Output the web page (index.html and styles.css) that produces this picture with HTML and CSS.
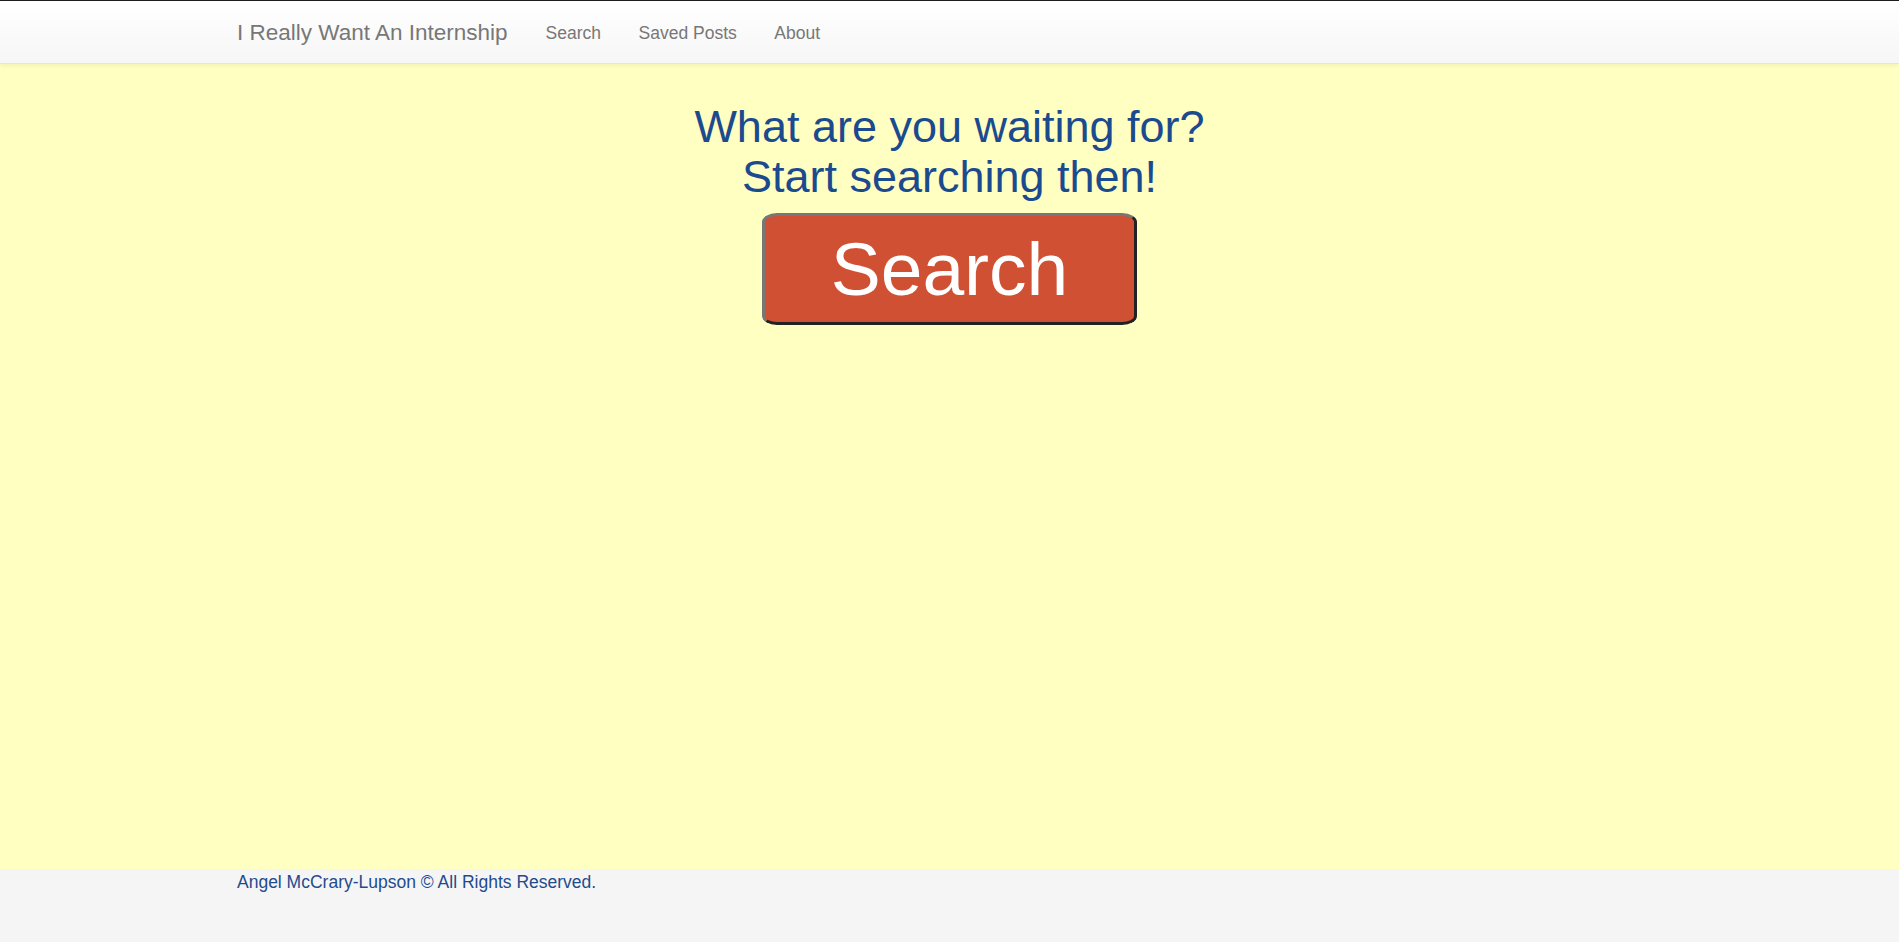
FILE: index.html
```html
<!DOCTYPE html>
<html lang="en">
<head>
<meta charset="utf-8">
<title>I Really Want An Internship</title>
<link rel="stylesheet" href="styles.css">
</head>
<body>
<nav class="navbar">
  <div class="container nav-inner">
    <a class="brand" href="#">I Really Want An Internship</a>
    <ul class="nav-links">
      <li><a href="#">Search</a></li>
      <li><a href="#">Saved Posts</a></li>
      <li><a href="#">About</a></li>
    </ul>
  </div>
</nav>
<main class="main">
  <h1 class="headline">What are you waiting for?<br>Start searching then!</h1>
  <button class="search-btn" type="button">Search</button>
</main>
<footer class="footer">
  <div class="container">
    <p class="footer-text">Angel McCrary-Lupson © All Rights Reserved.</p>
  </div>
</footer>
</body>
</html>
```
FILE: styles.css
```css
* { box-sizing: border-box; }
html, body { margin: 0; padding: 0; }
body {
  font-family: "Liberation Sans", Arial, sans-serif;
  min-height: 100vh;
  display: flex;
  flex-direction: column;
  background: #ffffc1;
}
.container {
  max-width: 1425px;
  width: 100%;
  margin: 0 auto;
}
.navbar {
  border-top: 1px solid #1c1c1c;
  border-bottom: 1px solid #e3e3e8;
  background: linear-gradient(to bottom, #ffffff 0%, #f6f6f6 100%);
  box-shadow: 0 1px 5px rgba(0, 0, 0, 0.075);
  position: relative;
  z-index: 1;
}
.nav-inner {
  height: 62px;
  padding-top: 2px;
  display: flex;
  align-items: center;
}
.brand {
  font-size: 22.5px;
  color: #777;
  text-decoration: none;
}
.nav-links {
  list-style: none;
  margin: 0 0 0 38px;
  padding: 0;
  display: flex;
  gap: 37.5px;
}
.nav-links a {
  font-size: 17.5px;
  color: #777;
  text-decoration: none;
}
.main {
  flex: 1;
  display: flex;
  flex-direction: column;
  align-items: center;
  padding-top: 38px;
}
.headline {
  margin: 0 0 12px;
  font-size: 45px;
  line-height: 49.5px;
  font-weight: normal;
  color: #1b4a8f;
  text-align: center;
}
.search-btn {
  width: 375px;
  height: 112px;
  background: #d05034;
  color: #fff;
  font-family: "Liberation Sans", Arial, sans-serif;
  font-size: 75px;
  border-style: solid;
  border-width: 3px;
  border-color: #777 #222 #222 #777;
  border-radius: 15px / 9px;
  padding: 0;
  display: flex;
  align-items: center;
  justify-content: center;
  cursor: pointer;
}
.footer {
  background: #f5f5f5;
  height: 73px;
}
.footer-text {
  margin: 0;
  padding-top: 1px;
  font-size: 17.5px;
  line-height: 24px;
  color: #1f4c8e;
}
```
